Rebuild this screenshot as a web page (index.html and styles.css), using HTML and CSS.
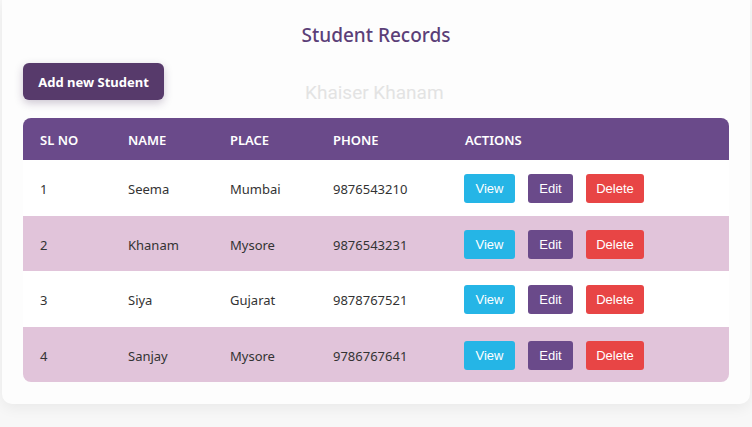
FILE: index.html
```html
<!DOCTYPE html>
<html>
<head>
<meta charset="utf-8">
<link rel="stylesheet" href="styles.css">
</head>
<body>
<div class="card">
  <h1 class="title">Student Records</h1>
  <div class="toolbar">
    <button class="add-btn">Add new Student</button>
    <span class="watermark">Khaiser Khanam</span>
  </div>
  <div class="table">
    <div class="row head">
      <div class="cell">SL NO</div>
      <div class="cell">NAME</div>
      <div class="cell">PLACE</div>
      <div class="cell">PHONE</div>
      <div class="cell">ACTIONS</div>
    </div>
    <div class="row">
      <div class="cell">1</div>
      <div class="cell">Seema</div>
      <div class="cell">Mumbai</div>
      <div class="cell">9876543210</div>
      <div class="cell actions"><button class="btn view">View</button><button class="btn edit">Edit</button><button class="btn del">Delete</button></div>
    </div>
    <div class="row alt">
      <div class="cell">2</div>
      <div class="cell">Khanam</div>
      <div class="cell">Mysore</div>
      <div class="cell">9876543231</div>
      <div class="cell actions"><button class="btn view">View</button><button class="btn edit">Edit</button><button class="btn del">Delete</button></div>
    </div>
    <div class="row">
      <div class="cell">3</div>
      <div class="cell">Siya</div>
      <div class="cell">Gujarat</div>
      <div class="cell">9878767521</div>
      <div class="cell actions"><button class="btn view">View</button><button class="btn edit">Edit</button><button class="btn del">Delete</button></div>
    </div>
    <div class="row alt">
      <div class="cell">4</div>
      <div class="cell">Sanjay</div>
      <div class="cell">Mysore</div>
      <div class="cell">9786767641</div>
      <div class="cell actions"><button class="btn view">View</button><button class="btn edit">Edit</button><button class="btn del">Delete</button></div>
    </div>
  </div>
</div>
</body>
</html>
```
FILE: styles.css
```css
* { box-sizing: border-box; }
html, body { margin: 0; padding: 0; }
body {
  background: #f7f7f7;
  font-family: "Noto Sans", "Open Sans", sans-serif;
  width: 752px;
  height: 427px;
  overflow: hidden;
}
.card {
  margin: 0 2px;
  height: 404px;
  background: #fdfdfd;
  border-radius: 0 0 10px 10px;
  box-shadow: 0 4px 14px rgba(0,0,0,0.06);
  padding: 20px 21px 0 21px;
}
.title {
  margin: 0;
  text-align: center;
  font-size: 19px;
  font-weight: 500;
  color: #5b3f78;
  line-height: 30px;
}
.toolbar {
  display: flex;
  align-items: center;
  margin-top: 13px;
  height: 37px;
}
.add-btn {
  width: 141px;
  height: 37px;
  border: none;
  border-radius: 6px;
  background: #573a6b;
  color: #fff;
  font-family: "Noto Sans", "Open Sans", sans-serif;
  font-weight: 700;
  font-size: 13px;
  box-shadow: 0 3px 8px rgba(60,30,80,0.25);
  padding: 0;
}
.watermark {
  margin-left: 141px;
  margin-top: 21px;
  font-family: Roboto, sans-serif;
  font-size: 19px;
  color: #e3e3e3;
}
.table {
  margin-top: 18px;
  width: 706px;
  border-radius: 8px;
  overflow: hidden;
}
.row {
  display: grid;
  grid-template-columns: 88px 102px 103px 132px 1fr;
  height: 55.5px;
  align-items: center;
  background: #fff;
  font-size: 13px;
  color: #333;
}
.row.alt { background: #e1c4da; }
.row.head {
  height: 42px;
  background: #6a4a8a;
  color: #fff;
  font-weight: 600;
  font-size: 13px;
}
.cell { padding-left: 17px; padding-top: 3px; }
.head .cell { padding-top: 2px; }
.actions { display: flex; gap: 13px; padding-left: 16px; padding-top: 2px; }
.btn {
  height: 29px;
  border: none;
  border-radius: 3px;
  color: #fff;
  font-family: "Liberation Sans", Arial, sans-serif;
  font-size: 13px;
  padding: 0;
}
.view { width: 51px; background: #25b5e6; }
.edit { width: 45px; background: #6a4a8a; }
.del { width: 58px; background: #e84545; }
```
